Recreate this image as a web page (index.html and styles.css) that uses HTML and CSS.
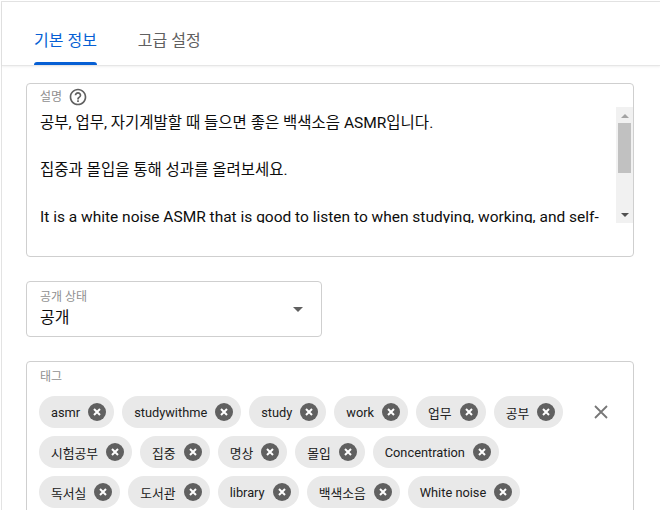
FILE: index.html
```html
<!DOCTYPE html>
<html lang="ko">

<head>
    <meta charset="UTF-8">
    <meta name="viewport" content="width=device-width, initial-scale=1.0">
    <title>세부정보</title>
    <link rel="stylesheet" href="styles.css">
</head>

<body>
    <div class="panel">
        <!-- Tabs -->
        <div class="tabs">
            <div class="tab active">
                <span class="tab-label">기본 정보</span>
                <span class="tab-bar"></span>
            </div>
            <div class="tab">
                <span class="tab-label">고급 설정</span>
                <span class="tab-bar"></span>
            </div>
        </div>

        <div class="content">
            <!-- Description -->
            <div class="field description">
                <div class="field-label">
                    설명
                    <svg class="help" viewBox="0 0 24 24" width="20" height="20">
                        <path d="M11 18h2v-2h-2v2zm1-16C6.48 2 2 6.48 2 12s4.48 10 10 10 10-4.48 10-10S17.52 2 12 2zm0 18c-4.41 0-8-3.59-8-8s3.59-8 8-8 8 3.59 8 8-3.59 8-8 8zm0-14c-2.21 0-4 1.79-4 4h2c0-1.1.9-2 2-2s2 .9 2 2c0 2-3 1.75-3 5h2c0-2.25 3-2.5 3-5 0-2.21-1.79-4-4-4z" />
                    </svg>
                </div>
                <div class="text-area">
                    <div class="text">공부, 업무, 자기계발할 때 들으면 좋은 백색소음 ASMR입니다.<br><br>집중과 몰입을 통해 성과를 올려보세요.<br><br>It is a white noise ASMR that is good to listen to when studying, working, and self-development.<br><br>Improve your performance through concentration and immersion.</div>
                    <div class="scrollbar">
                        <span class="arrow up"></span>
                        <span class="thumb"></span>
                        <span class="arrow down"></span>
                    </div>
                </div>
            </div>

            <!-- Visibility -->
            <div class="field select">
                <div class="select-text">
                    <div class="field-label">공개 상태</div>
                    <div class="select-value">공개</div>
                </div>
                <span class="caret"></span>
            </div>

            <!-- Tags -->
            <div class="field tags">
                <div class="field-label">태그</div>
                <div class="tag-row">
                    <div class="chips" id="chips"></div>
                    <div class="clear-all">
                        <svg viewBox="0 0 14 14" width="14" height="14">
                            <path d="M1 1L13 13M13 1L1 13" />
                        </svg>
                    </div>
                </div>
            </div>
        </div>
    </div>

    <script>
        const tags = ['asmr', 'studywithme', 'study', 'work', '업무', '공부', '시험공부', '집중', '명상', '몰입',
            'Concentration', '독서실', '도서관', 'library', '백색소음', 'White noise', '카페소음', 'focus'];

        const chips = document.getElementById('chips');
        chips.innerHTML = tags.map(tag => `
            <span class="chip">
                <span class="chip-text">${tag}</span>
                <svg class="chip-remove" viewBox="0 0 18 18" width="18" height="18">
                    <circle cx="9" cy="9" r="9" />
                    <path d="M6 6L12 12M12 6L6 12" />
                </svg>
            </span>`).join('');
    </script>
</body>

</html>
```

FILE: styles.css
```css
body {
    margin: 0;
    font-family: Roboto, "Noto Sans CJK KR", sans-serif;
    background-color: #fff;
    color: #0d0d0d;
    overflow: hidden;
}

.panel {
    margin: 1px 0 0 1px;
    border-top: 1px solid #e3e3e3;
    border-left: 1px solid #e3e3e3;
    height: 600px;
}

/* Tabs */
.tabs {
    display: flex;
    gap: 41px;
    height: 63px;
    padding-left: 32px;
    border-bottom: 1px solid #e6e6e6;
    box-shadow: 0 1px 2px rgba(0, 0, 0, 0.06);
}

.tab {
    display: flex;
    flex-direction: column;
    justify-content: flex-end;
    font-size: 16px;
    color: #606060;
}

.tab-label {
    line-height: 20px;
    padding-bottom: 11px;
}

.tab-bar {
    height: 3px;
    border-radius: 3px 3px 0 0;
}

.tab.active {
    color: #065fd4;
}

.tab.active .tab-bar {
    background: #065fd4;
}

/* Fields */
.content {
    padding: 17px 26px 0 24px;
}

.field {
    border: 1px solid #cfcfcf;
    border-radius: 4px;
    margin-bottom: 24px;
}

.field-label {
    display: flex;
    align-items: center;
    height: 16px;
    font-size: 12px;
    line-height: 16px;
    color: #909090;
}

.description {
    padding: 5px 0 33px 13px;
}

.help {
    fill: #606060;
    margin-left: 6px;
}

.text-area {
    display: flex;
    height: 116px;
    margin-top: 2px;
}

.text {
    flex: 1;
    overflow: hidden;
    padding-top: 5px;
    font-size: 15.5px;
    line-height: 23.5px;
    color: #0d0d0d;
}

.scrollbar {
    width: 17px;
    display: flex;
    flex-direction: column;
    align-items: center;
    background: #f1f1f1;
}

.arrow {
    width: 0;
    height: 0;
    border-left: 4px solid transparent;
    border-right: 4px solid transparent;
}

.arrow.up {
    margin-top: 7px;
    border-bottom: 4px solid #a3a3a3;
}

.arrow.down {
    margin-top: auto;
    margin-bottom: 6px;
    border-top: 4px solid #505050;
}

.thumb {
    width: 13px;
    height: 50px;
    margin-top: 5px;
    background: #c1c1c1;
}

/* Visibility select */
.select {
    display: flex;
    align-items: center;
    width: 296px;
    padding: 7px 18px 7px 13px;
    box-sizing: border-box;
}

.select-text {
    flex: 1;
}

.select-value {
    margin-top: 2px;
    font-size: 16px;
    line-height: 22px;
    color: #0d0d0d;
}

.caret {
    width: 0;
    height: 0;
    border-left: 5px solid transparent;
    border-right: 5px solid transparent;
    border-top: 5px solid #606060;
}

/* Tags */
.tags {
    padding: 7px 18px 20px 12px;
}

.tags .field-label {
    padding-left: 1px;
}

.tag-row {
    display: flex;
    margin-top: 11px;
}

.chips {
    flex: 1;
    display: flex;
    flex-wrap: wrap;
    gap: 8px;
    margin-right: 8px;
}

.chip {
    display: flex;
    align-items: center;
    gap: 8px;
    height: 32px;
    padding: 0 8px 0 12px;
    border-radius: 16px;
    background: #e9e9e9;
    font-size: 12.8px;
    color: #202020;
}

.chip-remove circle {
    fill: #606060;
}

.chip-remove path {
    stroke: #fff;
    stroke-width: 2;
}

.clear-all {
    display: flex;
    align-items: center;
    justify-content: center;
    width: 28px;
    height: 32px;
}

.clear-all path {
    stroke: #777;
    stroke-width: 1.8;
}
```
